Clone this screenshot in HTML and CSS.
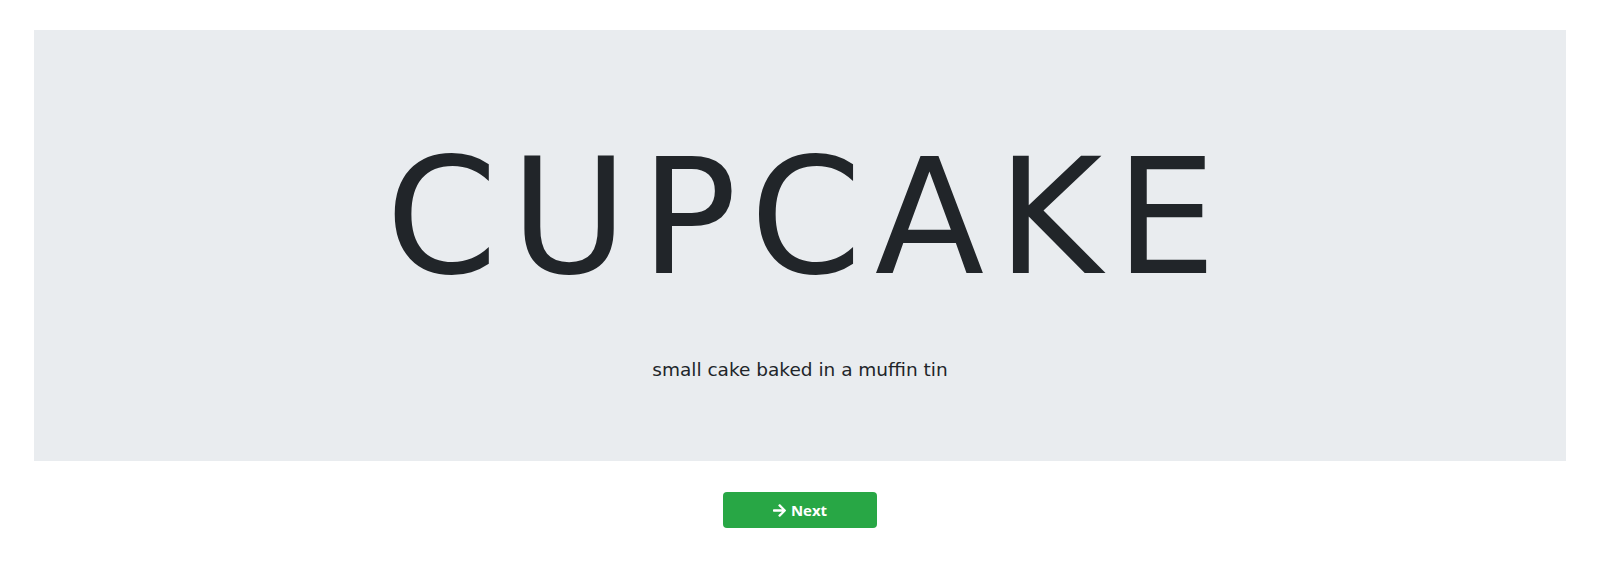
FILE: index.html
```html
<!DOCTYPE html>
<html lang="en">
<head>
<meta charset="utf-8">
<title>Cupcake</title>
<link rel="stylesheet" href="styles.css">
</head>
<body>
<main class="page">
  <section class="card">
    <h1 class="word">CUPCAKE</h1>
    <p class="definition">small cake baked in a muffin tin</p>
  </section>
  <div class="actions">
    <button class="next-btn" type="button">
      <svg class="arrow" viewBox="0 0 448 512" aria-hidden="true"><path fill="currentColor" d="M190.5 66.9l22.2-22.2c9.4-9.4 24.6-9.4 33.9 0L441 239c9.4 9.4 9.4 24.6 0 33.9L246.6 467.3c-9.4 9.4-24.6 9.4-33.9 0l-22.2-22.2c-9.5-9.5-9.3-25 .4-34.3L311.4 296H24c-13.3 0-24-10.7-24-24v-32c0-13.3 10.7-24 24-24h287.4L190.9 101.2c-9.8-9.3-10-24.8-.4-34.3z"/></svg>
      <span>Next</span>
    </button>
  </div>
</main>
</body>
</html>
```

FILE: styles.css
```css
html, body {
  margin: 0;
  padding: 0;
  background: #ffffff;
}

body {
  font-family: "DejaVu Sans", "Liberation Sans", sans-serif;
  color: #212529;
}

.page {
  padding: 30px 34px 0;
}

.card {
  background: #e9ecef;
  height: 431px;
  box-sizing: border-box;
  padding-top: 92px;
  text-align: center;
}

.word {
  margin: 0;
  font-size: 160px;
  line-height: 192px;
  font-weight: 400;
  letter-spacing: 13px;
  padding-left: 15px;
}

.definition {
  margin: 44px 0 0;
  font-size: 18.5px;
  line-height: 24px;
}

.actions {
  display: flex;
  justify-content: center;
  padding-top: 31px;
}

.next-btn {
  width: 154px;
  height: 36px;
  display: flex;
  align-items: center;
  justify-content: center;
  gap: 5px;
  padding: 0;
  border: none;
  border-radius: 4px;
  background: #28a745;
  color: #ffffff;
  font-family: "Open Sans", "Liberation Sans", sans-serif;
  font-weight: 700;
  font-size: 15px;
  cursor: pointer;
}

.arrow {
  width: 13px;
  height: 15px;
}
```
